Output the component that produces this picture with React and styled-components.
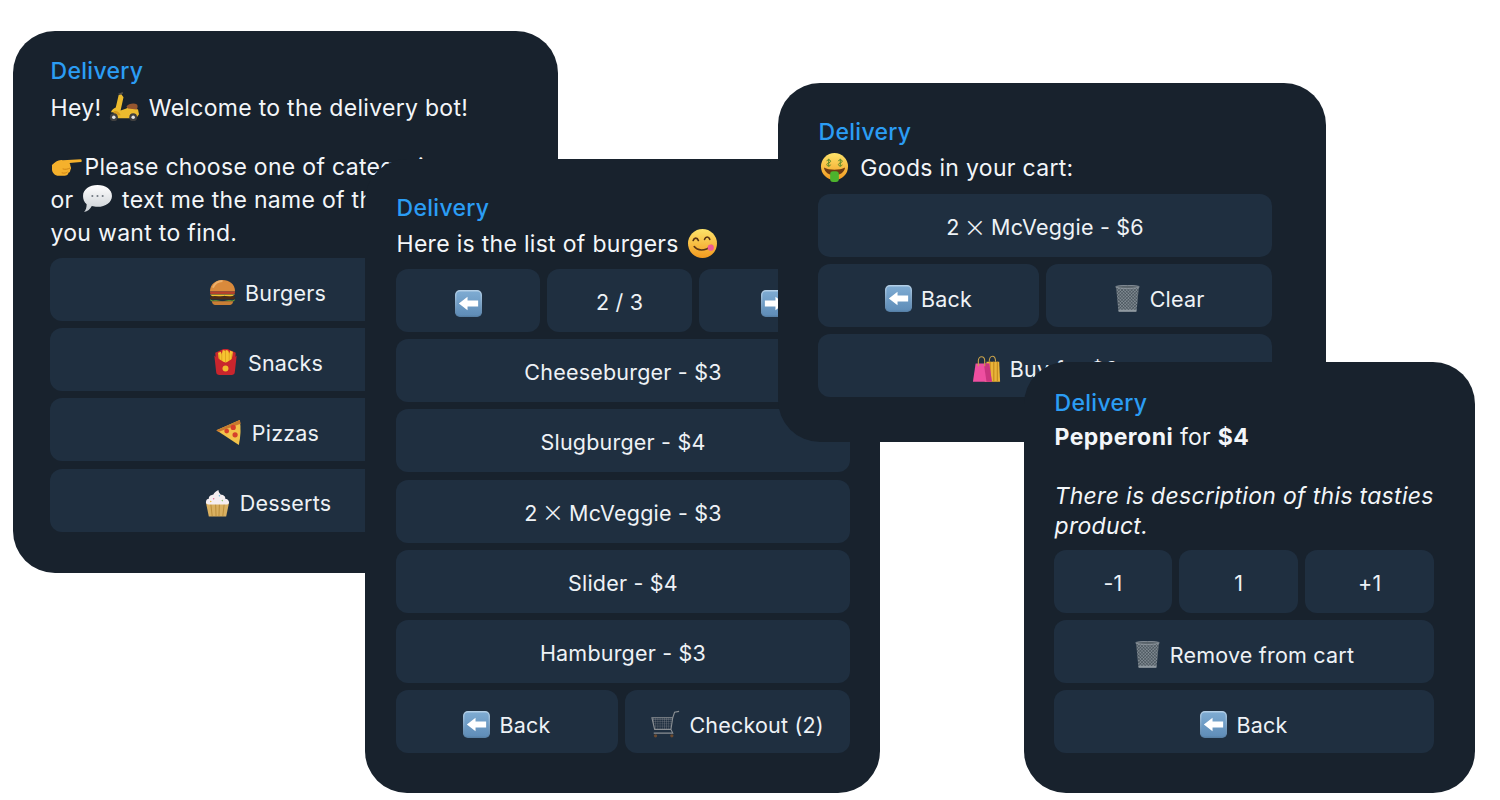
import React from 'react';
import styled, { createGlobalStyle } from 'styled-components';

const Global = createGlobalStyle`
  html, body { margin: 0; padding: 0; background: #fff; }
  body { font-family: Inter, "Noto Sans", sans-serif; }
`;
const Canvas = styled.div`
  position: relative;
  width: 1500px;
  height: 800px;
  overflow: hidden;
  background: #fff;
`;
const Card = styled.section`
  position: absolute;
  box-sizing: border-box;
  left: ${p => p.$x}px;
  top: ${p => p.$y}px;
  width: ${p => p.$w}px;
  height: ${p => p.$h}px;
  padding: ${p => p.$pad};
  border-radius: 42px;
  background: #18222d;
  overflow: hidden;
`;
const Sender = styled.div`
  font-size: 23px;
  font-weight: 500;
  letter-spacing: 0.3px;
  line-height: 30px;
  color: #2b9df4;
  margin: 0 0 ${p => p.$gap}px 0.5px;
`;
const Message = styled.div`
  font-size: 23px;
  letter-spacing: 0.3px;
  line-height: ${p => p.$lh}px;
  color: #f3f6f9;
  white-space: nowrap;
  margin-left: 0.5px;
  svg { margin-block: -8px; vertical-align: 2px; }
`;
const Para = styled.p`
  margin: 0 0 ${p => p.$after || 0}px;
  em { font-style: italic; }
  b { font-weight: 700; letter-spacing: 0.45px; }
`;
const Keyboard = styled.div`
  display: flex;
  flex-direction: column;
  gap: 7.2px;
  margin-top: ${p => p.$top}px;
`;
const Row = styled.div`
  display: grid;
  grid-template-columns: ${p => p.$cols || '1fr'};
  gap: 7.2px;
`;
const Key = styled.div`
  box-sizing: border-box;
  height: 63px;
  padding-top: ${p => (p.$emoji ? 6 : 3)}px;
  display: flex;
  align-items: center;
  justify-content: center;
  gap: 9px;
  border-radius: 12px;
  background: #1f2f40;
  color: #eef2f6;
  font-size: 21.5px;
  letter-spacing: 0.2px;
  white-space: nowrap;
  overflow: hidden;
`;
const Times = styled.span`
  font-size: 33px;
  font-weight: 200;
  line-height: 0;
  vertical-align: -1.5px;
  margin-inline: -1.5px -1px;
`;
const Glyph = styled.svg`
  width: ${p => p.$s || 27}px;
  height: ${p => p.$s || 27}px;
  flex: none;
  margin-inline: ${p => p.$ml || 0}px ${p => p.$mr || 0}px;
`;

const Arrow = ({ right }) => (
  <Glyph viewBox="2 2 28 28">
    <defs>
      <linearGradient id="ab" x1="0" y1="0" x2="0" y2="1">
        <stop offset="0" stopColor="#b4d0e8" />
        <stop offset="1" stopColor="#557fa6" />
      </linearGradient>
      <linearGradient id="ac" x1="0" y1="0" x2="0" y2="1">
        <stop offset="0" stopColor="#7eabd2" />
        <stop offset="1" stopColor="#5f8db8" />
      </linearGradient>
    </defs>
    <rect x="2" y="2" width="28" height="28" rx="5" fill="url(#ab)" />
    <rect x="3.500" y="3.500" width="25" height="25" rx="3.500" fill="url(#ac)" />
    <path d={right ? 'M26 16 17 9v4H6v6h11v4z' : 'M6 16l9-7v4h11v6H15v4z'} fill="#fff" />
  </Glyph>
);
const Burger = () => (
  <Glyph viewBox="2 2 28 28">
    <path d="M3 15C3 7 9 3 16 3s13 4 13 12z" fill="#d98a3c" />
    <path d="M6 11c2-5 6-7 10-7" stroke="#eeb06a" strokeWidth="2" fill="none" />
    <rect x="3" y="15" width="26" height="2.600" rx="1.300" fill="#b5402c" />
    <path d="M3 18h26l-5 3-6-1.600-5 1.600-5-1.400-2 .8z" fill="#f4c22e" />
    <rect x="3" y="20" width="26" height="3" rx="1.500" fill="#4b2a16" />
    <path d="M3 23c3 2 4 1 6.500 1s4 1 6.500 1 4-1 6.500-1 3.500 1 6.500-1l-1 2H4z" fill="#6fa72e" />
    <path d="M5 25h22c0 3-2 4-5 4H10c-3 0-5-1-5-4z" fill="#c97e35" />
  </Glyph>
);
const Fries = () => (
  <Glyph viewBox="3 1 26 29">
    <path d="M5 5 16 0l11 5-1 14H6z" fill="#c9252d" />
    <path d="M9 15 8 5l3-1 1 3 1-5 3 1 1-1 2 1 1 3 1-3 3 1-2 12z" fill="#f6c431" />
    <path d="M12 6v9M16 3v12M20 5v10M9 7l1 8M23 6l-1 9" stroke="#d99a1c" strokeWidth=".8" />
    <path d="M4 8c0 0 3 3 12 8 9-5 12-8 12-8l-2 18c-.2 2-1.500 3-3.500 3h-13C7.500 29 6.200 28 6 26z" fill="#c9252d" />
    <circle cx="16" cy="22" r="3.200" fill="#f1b92d" />
  </Glyph>
);
const Pizza = () => (
  <Glyph viewBox="2 2 28 29">
    <path d="M2 14 27 3c1.500 8 1 18-1 27z" fill="#f3c34a" />
    <path d="M2 14 27 3l1 4L4 16z" fill="#c87a2e" />
    <circle cx="20" cy="11" r="2.800" fill="#d5402b" />
    <circle cx="13" cy="15" r="2.600" fill="#d5402b" />
    <circle cx="22" cy="19" r="2.800" fill="#d5402b" />
  </Glyph>
);
const Cupcake = () => (
  <Glyph viewBox="2 2 28 28">
    <path d="M4 15h24l-3 14.500H7z" fill="#d9b060" />
    <path d="M9 16l1.500 13M14 16l.5 13M18 16l-.5 13M23 16l-1.500 13" stroke="#b98c3a" strokeWidth="1" />
    <path d="M4 15c0-3 1.500-4 3-4 0-3 3-4 4.500-4C13 4 15 3 17 2c0 2 1 3 2.500 5 3 0 5 2 4.500 4 2 0 4 1.500 4 4 0 2-2 2-3 2H7c-2 0-3-1-3-2z" fill="#f5eef0" />
    <circle cx="12" cy="11" r=".8" fill="#e66f9a" />
    <circle cx="18" cy="8" r=".8" fill="#6fb5d8" />
    <circle cx="21" cy="13" r=".8" fill="#8fc46b" />
    <circle cx="9" cy="14" r=".8" fill="#e9b93a" />
  </Glyph>
);
const Scooter = ({ ...r }) => (
  <Glyph viewBox="0 0 32 32" $s={31} {...r}>
    <path d="M10 3l5-2 .6 1.500-2.600 1.500z" fill="#55504a" />
    <path d="M11 4l3-.5 2 3L13 20l6-2 2-2 10 3 1 5-3 4H10c0-4-3-6-7-6 1-3 3-4 5-5z" fill="#ecbb2e" />
    <path d="M19 16c2-3 8-4 11-2 1 2 .5 4-.5 5l-9-1z" fill="#95562f" />
    <path d="M6 21c3-1 6 1 7 4H6z" fill="#d89c1c" />
    <circle cx="6" cy="27" r="4" fill="#3f3f3f" /><circle cx="6" cy="27" r="1.800" fill="#e2e2e2" />
    <circle cx="26" cy="27" r="4" fill="#3f3f3f" /><circle cx="26" cy="27" r="1.800" fill="#e2e2e2" />
  </Glyph>
);
const Point = ({ ...r }) => (
  <Glyph viewBox="0 3 32 25" $s={31} {...r}>
    <path d="M1 15c3-3 7-6 11-5l19-1c1 1 1 3 0 3l-12 1c1 1 1 2 1 3 1 1 1 3 0 4 0 2-1 3-2 3 0 2-2 3-4 3H8c-4 0-7-3-7-7z" fill="#f5b12c" />
    <path d="M12 19c3 1 6 0 8-1M11 23c3 1 5 0 6-1" stroke="#cf8415" strokeWidth="1" fill="none" />
  </Glyph>
);
const Bubble = ({ ...r }) => (
  <Glyph viewBox="1 2 30 28" $s={31} {...r}>
    <defs>
      <linearGradient id="bb" x1="0" y1="0" x2="0" y2="1">
        <stop offset="0" stopColor="#ffffff" /><stop offset="1" stopColor="#c9ced3" />
      </linearGradient>
    </defs>
    <path d="M16 3c8 0 14 4.500 14 10.500S24 24 16 24c-2 0-4-.3-5.500-.8C9 26 6.500 28.500 3 29c2-2 2.500-5 2.500-7.500C3 19.500 2 16.500 2 13.500 2 7.500 8 3 16 3z" fill="url(#bb)" />
    <circle cx="11" cy="13.500" r="1" fill="#707880" />
    <circle cx="16" cy="13.500" r="1" fill="#707880" />
    <circle cx="21" cy="13.500" r="1" fill="#707880" />
  </Glyph>
);
const Yum = ({ ...r }) => (
  <Glyph viewBox="2 2 28 28" $s={29} {...r}>
    <defs>
      <linearGradient id="fc" x1="0" y1="0" x2="0" y2="1">
        <stop offset="0" stopColor="#fde36a" /><stop offset="1" stopColor="#f29a1f" />
      </linearGradient>
    </defs>
    <circle cx="16" cy="16" r="14" fill="url(#fc)" />
    <path d="M7 13c1-3 4-3 5 0M18 12c1-3 4-3 5 0" stroke="#5a3414" strokeWidth="1.600" fill="none" strokeLinecap="round" />
    <path d="M8 19c3 4 10 5 17-1" stroke="#5a3414" strokeWidth="1.600" fill="none" strokeLinecap="round" />
    <circle cx="24" cy="20" r="3" fill="#f05a94" />
  </Glyph>
);
const Money = ({ ...r }) => (
  <Glyph viewBox="2 1 28 30" $s={29} {...r}>
    <defs>
      <linearGradient id="fm" x1="0" y1="0" x2="0" y2="1">
        <stop offset="0" stopColor="#fde36a" /><stop offset="1" stopColor="#f29a1f" />
      </linearGradient>
    </defs>
    <circle cx="16" cy="15" r="14" fill="url(#fm)" />
    <path d="M5 16c6 3 16 3 22 0-1 5-5 8-11 8S6 21 5 16z" fill="#6e3b13" />
    <rect x="11.500" y="20" width="9" height="11" rx="3" fill="#4cb32d" />
    <path d="M10 7v8M8 9.500c0-2 4-2 4 0s-4 1.500-4 3.500 4 2 4 0M22 7v8M20 9.500c0-2 4-2 4 0s-4 1.500-4 3.500 4 2 4 0" stroke="#5c8a28" strokeWidth="1" fill="none" />
  </Glyph>
);
const Trash = () => (
  <Glyph viewBox="3 2 26 28.500">
    <defs>
      <pattern id="mesh" width="2.400" height="2.400" patternUnits="userSpaceOnUse" patternTransform="rotate(45)">
        <path d="M0 0h2.400M0 0v2.400" stroke="#2e3a42" strokeWidth=".8" />
      </pattern>
    </defs>
    <path d="M4 4h24l-2.500 26h-19z" fill="#7e8890" />
    <path d="M4 4h24l-2.500 26h-19z" fill="url(#mesh)" />
    <ellipse cx="16" cy="4" rx="12.500" ry="1.600" fill="#59636a" stroke="#9aa3aa" strokeWidth=".8" />
    <path d="M6.500 28h19l-.3 2.200H6.800z" fill="#8f99a0" />
  </Glyph>
);
const Cart = () => (
  <Glyph viewBox="0 0 32 31" $s={29}>
    <defs>
      <pattern id="wire" width="2.400" height="2.400" patternUnits="userSpaceOnUse">
        <path d="M0 0h2.400M0 0v2.400" stroke="#8f9397" strokeWidth=".6" />
      </pattern>
    </defs>
    <path d="M1 8h23l-2 13H4z" fill="url(#wire)" />
    <path d="M1 8h23l-2 13H4zM24 8l2-6 5-1M22 21l2 4H3" stroke="#8a8f93" strokeWidth="1.200" fill="none" />
    <circle cx="5" cy="28" r="1.800" fill="#6b4a30" />
    <circle cx="23" cy="28" r="1.800" fill="#6b4a30" />
  </Glyph>
);
const Bags = () => (
  <Glyph viewBox="0 0 32 31" $s={29}>
    <path d="M16 8h14l1 22H14z" fill="#e9b43a" />
    <path d="M20 8v22M24 8v22M28 8v22" stroke="#c98e20" strokeWidth="1.400" />
    <path d="M19 8c0-8 7-8 7 0" stroke="#c9a24a" strokeWidth="1.200" fill="none" />
    <path d="M4 10h15l3 20H1z" fill="#ee4fa0" />
    <path d="M13 10h6l3 20h-6z" fill="#c9357f" />
    <path d="M7 13V7c0-6 7-6 7 0v6" stroke="#c9a24a" strokeWidth="1.200" fill="none" />
  </Glyph>
);

const Two = () => <>2 <Times>×</Times> McVeggie</>;

export default function App() {
  return (
    <Canvas>
      <Global />
      <Card $x={13} $y={31} $w={545} $h={542} $pad="25px 73px 0 37px">
        <Sender $gap={6}>Delivery</Sender>
        <Message $lh={33}>
          <Para $after={26}>Hey! <Scooter $mr={3} /> Welcome to the delivery bot!</Para>
          <Para><Point $mr={3} />Please choose one of categories<br />or <Bubble $ml={2} $mr={2} /> text me the name of the product<br />you want to find.</Para>
        </Message>
        <Keyboard $top={8}>
          <Key $emoji><Burger />Burgers</Key>
          <Key $emoji><Fries />Snacks</Key>
          <Key $emoji><Pizza />Pizzas</Key>
          <Key $emoji><Cupcake />Desserts</Key>
        </Keyboard>
      </Card>

      <Card $x={365} $y={159} $w={515} $h={634} $pad="34px 30px 0 31px">
        <Sender $gap={5}>Delivery</Sender>
        <Message $lh={33}><Para>Here is the list of burgers <Yum $ml={2} /></Para></Message>
        <Keyboard $top={8}>
          <Row $cols="144px 145px 1fr">
            <Key $emoji><Arrow /></Key>
            <Key>2 / 3</Key>
            <Key $emoji><Arrow right /></Key>
          </Row>
          <Key>Cheeseburger - $3</Key>
          <Key>Slugburger - $4</Key>
          <Key><span><Two /> - $3</span></Key>
          <Key>Slider - $4</Key>
          <Key>Hamburger - $3</Key>
          <Row $cols="222px 1fr">
            <Key $emoji><Arrow />Back</Key>
            <Key $emoji><Cart />Checkout (2)</Key>
          </Row>
        </Keyboard>
      </Card>

      <Card $x={778} $y={83} $w={548} $h={359} $pad="34px 54px 0 40px">
        <Sender $gap={5}>Delivery</Sender>
        <Message $lh={33}><Para><Money $ml={1} $mr={5} /> Goods in your cart:</Para></Message>
        <Keyboard $top={9}>
          <Key><span><Two /> - $6</span></Key>
          <Row $cols="221px 1fr">
            <Key $emoji><Arrow />Back</Key>
            <Key $emoji><Trash />Clear</Key>
          </Row>
          <Key $emoji><Bags />Buy for $6</Key>
        </Keyboard>
      </Card>

      <Card $x={1024} $y={362} $w={451} $h={431} $pad="26px 41px 0 30px">
        <Sender $gap={5}>Delivery</Sender>
        <Message $lh={29.5}>
          <Para $after={29.5}><b>Pepperoni</b> for <b>$4</b></Para>
          <Para><em>There is description of this tasties<br />product.</em></Para>
        </Message>
        <Keyboard $top={9}>
          <Row $cols="118px 119px 1fr">
            <Key>-1</Key>
            <Key>1</Key>
            <Key>+1</Key>
          </Row>
          <Key $emoji><Trash />Remove from cart</Key>
          <Key $emoji><Arrow />Back</Key>
        </Keyboard>
      </Card>
    </Canvas>
  );
}
